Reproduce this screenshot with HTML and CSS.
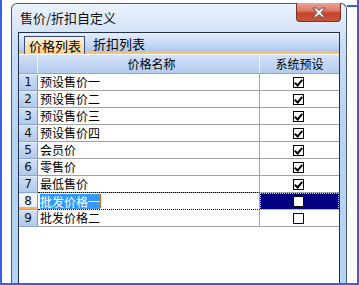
FILE: index.html
```html
<!DOCTYPE html>
<html lang="zh">
<head>
<meta charset="utf-8">
<title>售价/折扣自定义</title>
<link rel="stylesheet" href="styles.css">
</head>
<body>
<div class="screen">
  <div class="window">
    <div class="titlebar">
      <span class="title">售价/折扣自定义</span>
      <div class="close">
        <svg width="14" height="11" viewBox="0 0 14 11"><path d="M1 1 H4.5 L7 3.6 L9.5 1 H13 L9 5.5 L13 10 H9.5 L7 7.4 L4.5 10 H1 L5 5.5 Z" fill="#fff" stroke="#6b5552" stroke-width="1" stroke-linejoin="round"/></svg>
      </div>
    </div>
    <div class="panel">
      <div class="tabs">
        <div class="tab active">价格列表</div>
        <div class="tab">折扣列表</div>
      </div>
      <div class="grid">
        <div class="row head">
          <div class="rh"></div>
          <div class="c name">价格名称</div>
          <div class="c chk">系统预设</div>
        </div>
        <div class="row"><div class="rh">1</div><div class="c name">预设售价一</div><div class="c chk"><span class="box on"></span></div></div>
        <div class="row"><div class="rh">2</div><div class="c name">预设售价二</div><div class="c chk"><span class="box on"></span></div></div>
        <div class="row"><div class="rh">3</div><div class="c name">预设售价三</div><div class="c chk"><span class="box on"></span></div></div>
        <div class="row"><div class="rh">4</div><div class="c name">预设售价四</div><div class="c chk"><span class="box on"></span></div></div>
        <div class="row"><div class="rh">5</div><div class="c name">会员价</div><div class="c chk"><span class="box on"></span></div></div>
        <div class="row"><div class="rh">6</div><div class="c name">零售价</div><div class="c chk"><span class="box on"></span></div></div>
        <div class="row"><div class="rh">7</div><div class="c name">最低售价</div><div class="c chk"><span class="box on"></span></div></div>
        <div class="row sel"><div class="rh">8</div><div class="c name"><span class="hl">批发价格一</span><span class="caret"></span></div><div class="c chk"><span class="box"></span></div></div>
        <div class="row"><div class="rh">9</div><div class="c name">批发价格二</div><div class="c chk"><span class="box"></span></div></div>
      </div>
    </div>
  </div>
</div>
</body>
</html>
```

FILE: styles.css
```css
html, body {
  margin: 0;
  padding: 0;
  background: #fff;
}

.screen {
  position: relative;
  width: 359px;
  height: 285px;
  box-sizing: border-box;
  border-left: 2px solid #3a5fe6;
  border-right: 2px solid #3a5fe6;
  border-bottom: 2px solid #3a5fe6;
  overflow: hidden;
  font-family: "Noto Sans CJK SC", "Noto Sans", sans-serif;
  color: #000;
}

.screen::after {
  content: "";
  position: absolute;
  top: 5px;
  right: 0;
  width: 10px;
  height: 2px;
  background: #3a5fe6;
}

.window {
  margin-left: 9px;
  margin-top: 3px;
  width: 336px;
  height: 280px;
  box-sizing: border-box;
  border: 1px solid #4c5a6e;
  border-bottom: none;
  border-radius: 6px 6px 0 0;
  background: linear-gradient(#eaf2fc 0px, #dae7f8 22px, #cadef6 40px, #b7d4f5 120px, #b4d3f6 100%);
  padding: 0 6px;
}

.titlebar {
  height: 28px;
  display: flex;
  align-items: flex-start;
}

.title {
  margin-left: 2px;
  margin-top: 7px;
  font-size: 13px;
  line-height: 14px;
  color: #111;
}

.close {
  margin-left: auto;
  margin-right: -1px;
  margin-top: -1px;
  width: 45px;
  height: 19px;
  box-sizing: border-box;
  border: 1px solid #7a3126;
  border-top: none;
  border-radius: 0 0 4px 4px;
  background: linear-gradient(#eaa79a 0%, #d9755f 45%, #c4442c 55%, #c9553a 100%);
  display: flex;
  align-items: center;
  justify-content: center;
  padding-top: 1px;
}

.close svg {
  display: block;
}

.panel {
  border: 1px solid #24314d;
  border-bottom: none;
  background: #fff;
  height: 260px;
}

.tabs {
  height: 19px;
  border-bottom: 2px solid #f6c27a;
  background: linear-gradient(#e3edfb, #c6d8f3 60%, #abc6ee);
  display: flex;
  align-items: flex-end;
  padding-left: 5px;
  gap: 4px;
  margin-bottom: 1px;
}

.tab {
  font-size: 13px;
  line-height: 17px;
  height: 17px;
  padding: 0 2px 0 4px;
}

.tab.active {
  height: 18px;
  line-height: 18px;
  margin-bottom: -2px;
  box-sizing: border-box;
  border: 1px solid #33508c;
  border-bottom: none;
  background: linear-gradient(#fff3de, #fde0b0 60%, #fbd08e);
  padding: 0 3px 0 4px;
}

.grid {
  width: 320px;
}

.row {
  display: grid;
  grid-template-columns: 19px 222px 79px;
  height: 17px;
}

.row.head {
  height: 19px;
}

.rh {
  box-sizing: border-box;
  border-right: 1px solid #7d97c0;
  border-bottom: 1px solid #8ea8cf;
  border-top: 1px solid #e2ecfa;
  background: linear-gradient(#cfdff5, #b1c9ec);
  font-family: "DejaVu Sans", sans-serif;
  font-size: 12px;
  line-height: 15px;
  text-align: center;
  color: #111;
}

.head .rh {
  border-right: 1px solid #f2f6fc;
  border-top: none;
}

.c {
  box-sizing: border-box;
  border-right: 1px solid #a3a3a3;
  border-bottom: 1px solid #a3a3a3;
  font-size: 12px;
  line-height: 16px;
  white-space: nowrap;
}

.c.chk {
  border-right: none;
  display: flex;
  align-items: center;
  justify-content: center;
}

.c.name {
  padding-left: 2px;
}

.head .c {
  background: linear-gradient(#d3e2f7, #b3cbee);
  border-bottom: 1px solid #8ea8cf;
  border-right: 1px solid #f2f6fc;
  line-height: 18px;
  text-align: center;
  color: #000;
}

.head .c.name {
  padding-left: 6px;
}

.head .c.chk {
  border-right: none;
}

.box {
  width: 11px;
  height: 11px;
  box-sizing: border-box;
  border: 1px solid #000;
  background: #fff;
  margin-left: -2px;
  position: relative;
}

.box.on::after {
  content: "";
  position: absolute;
  left: 2px;
  top: 0px;
  width: 3px;
  height: 6px;
  border-right: 2px solid #000;
  border-bottom: 2px solid #000;
  transform: rotate(40deg);
}

.sel .rh {
  background: linear-gradient(#f4f8fd, #e4edf9);
  box-shadow: inset 0 -2px 0 0 #f7b35c;
}

.sel .c.name {
  border-top: 1px dotted #000;
  border-bottom: 1px dotted #000;
  margin-top: -1px;
  height: 18px;
  line-height: 16px;
  display: flex;
  align-items: center;
}

.sel .c.chk {
  background: #000080;
  outline: 1px dotted #f0e040;
  outline-offset: -1px;
}

.hl {
  background: #3399ff;
  color: #fff;
  line-height: 15px;
}

.caret {
  display: inline-block;
  width: 1px;
  height: 14px;
  background: #e86a10;
}
```
